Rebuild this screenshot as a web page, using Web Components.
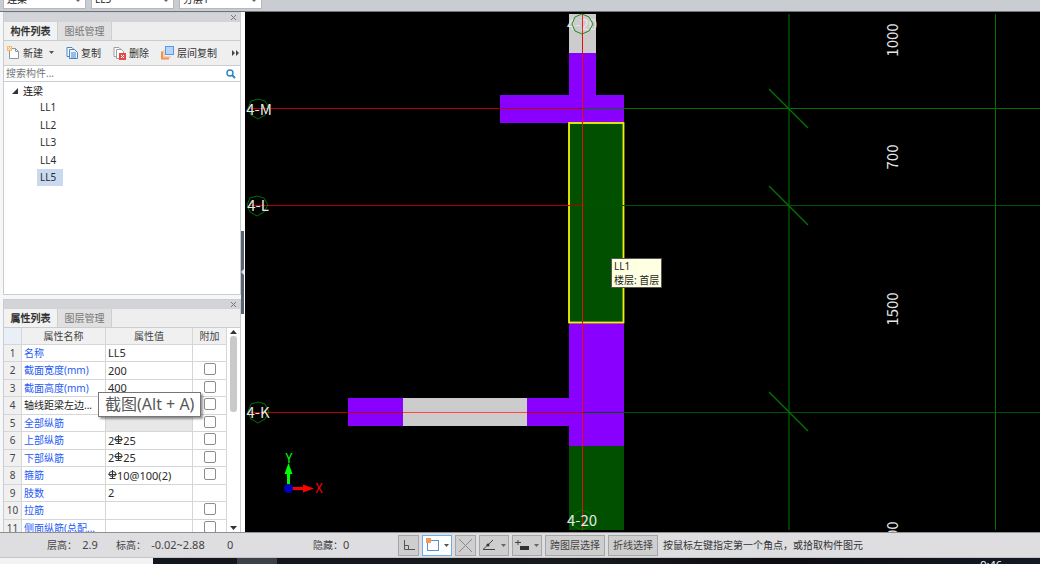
<!DOCTYPE html>
<html lang="zh-CN">
<head>
<meta charset="utf-8">
<title>构件编辑</title>
<style>
html,body{margin:0;height:100%}
body{font:10px/18px "Noto Sans","Noto Sans CJK SC",sans-serif;color:#2b2b2b;background:#dddde0;overflow:hidden}
</style>
</head>
<body>
<cad-app></cad-app>

<script>
const define = (name, html, setup) => customElements.define(name, class extends HTMLElement {
  constructor() {
    super();
    const t = document.createElement('template');
    t.innerHTML = html;
    this.attachShadow({mode: 'open'}).append(t.content.cloneNode(true));
  }
  connectedCallback() { if (setup) setup(this, this.shadowRoot); }
});

/* Context drop-downs, scrolled half out above the window */
define('top-bar', `
<style>
:host{display:flex;align-items:flex-end;gap:5px;height:12px;padding:0 3px 2px;box-sizing:border-box;background:#c9ccd1;border-bottom:1px solid #6f7479}
select{appearance:none;box-sizing:border-box;width:83px;height:20px;padding:0 3px;border:1px solid #b4b7bb;background:#fff;font:inherit;line-height:18px;color:#222}
label{position:relative;flex:none}
label::after{content:"";position:absolute;right:5px;bottom:7px;border:3px solid transparent;border-top-color:#666;border-bottom:0}
</style>
<label><select aria-label="构件类型"><option>连梁</option></select></label>
<label><select aria-label="构件"><option>LL5</option></select></label>
<label><select aria-label="分层"><option>分层1</option></select></label>`);

/* Docked panel: caption strip, two tabs, slotted body */
define('dock-panel', `
<style>
:host{display:flex;flex-direction:column;min-height:0;overflow:hidden;box-sizing:border-box;background:#fff;border:1px solid #c9cdd2}
.cap{display:flex;justify-content:flex-end;align-items:center;height:9px;background:#d2d4d8;flex:none;padding-right:3px}
.cap button{all:unset;display:flex}
nav{display:flex;flex:none;height:18px;background:#eee;border-bottom:1px solid #c9cdd2}
nav button{all:unset;box-sizing:border-box;width:54px;text-align:center;line-height:18px;color:#777;background:#e0e0e1;border-right:1px solid #ccd0d4}
nav button.on{color:#222;background:#f2f2f3;-webkit-text-stroke:.3px #222}
.body{flex:1;min-height:0;display:flex;flex-direction:column}
</style>
<div class="cap"><button aria-label="关闭"><svg width="7" height="7"><path d="M1 1l5 5M6 1L1 6" stroke="#777"/></svg></button></div>
<nav><button class="on"></button><button></button></nav>
<div class="body"><slot></slot></div>`, (el, r) => {
  const b = r.querySelectorAll('nav button');
  b[0].textContent = el.getAttribute('tab');
  b[1].textContent = el.getAttribute('other');
});

define('tool-action', `
<style>
:host{display:block;flex:none}
button{all:unset;display:flex;align-items:center;gap:3px;line-height:22px;color:#333}
</style>
<button><slot name="icon"></slot><slot></slot></button>`);

define('component-list', `
<style>
:host{display:flex;flex-direction:column;flex:1;min-height:0}
.tools{display:flex;align-items:center;height:24px;padding-left:3px;background:#efeff0;border-bottom:1px solid #c9cdd2;gap:12px;flex:none}
.tools>:last-child{margin-left:auto;padding-right:1px}
svg{display:block;flex:none}
.find{display:flex;align-items:center;height:15px;border-bottom:1px solid #c9cdd2;padding:0 4px 0 2px;flex:none}
input{flex:1;min-width:0;border:0;outline:0;padding:0;height:15px;font:inherit;line-height:15px}
input::placeholder{color:#757575;opacity:1}
ul{list-style:none;margin:0;padding:0}
.root{display:flex;align-items:center;gap:5px;height:17px;padding-left:8px;color:#111}
li li{display:flex;height:17px;padding-left:33px;line-height:17px}
li li:nth-child(even){height:18px;line-height:18px}
li li span{padding:0 7px 0 3px}
.sel{background:#c9d9f0}
</style>
<div class="tools">
 <tool-action><svg slot="icon" width="13" height="14" viewBox="0 0 13 14"><path d="M2.500 2.500h6l3 3v7h-9z" fill="#fff" stroke="#8b98a2"/><path d="M8.500 2.500v3h3" fill="none" stroke="#8b98a2"/><path d="M0 0h5v5H0z" fill="#fbb96a"/><path d="M1 1l3 3M4 1L1 4" stroke="#fff4df"/></svg>新建<svg width="8" height="6"><path d="M3 1h5L5.500 4z" fill="#555"/></svg></tool-action>
 <tool-action><svg slot="icon" width="12" height="14" viewBox="0 0 12 14"><path d="M1 1.500h5l2 2v7H1z" fill="#fff" stroke="#4986c6"/><path d="M3.500 3.500h5l3 3v6h-8z" fill="#e9f3ff" stroke="#4986c6"/><path d="M5 7h5M5 9h5M5 11h5" stroke="#4986c6"/></svg>复制</tool-action>
 <tool-action><svg slot="icon" width="13" height="14" viewBox="0 0 13 14"><path d="M1 1.500h5l2 2v7H1z" fill="#fff" stroke="#98a1a8"/><path d="M3.500 3.500h5l2 2v7h-7z" fill="#fff" stroke="#98a1a8"/><path d="M6 7h7v7H6z" fill="#e44848"/><path d="M8 9l3 3M11 9l-3 3" stroke="#fff"/></svg>删除</tool-action>
 <tool-action><svg slot="icon" width="13" height="14" viewBox="0 0 13 14"><path d="M1 5.500v7h7" fill="none" stroke="#f0914a" stroke-width="2"/><path d="M3 4v7h7" fill="none" stroke="#f5b37e"/><rect x="4.500" y=".5" width="8" height="8" fill="#b5d5ff" stroke="#5b98df"/></svg>层间复制</tool-action>
 <svg width="7" height="6"><path d="M0 0l3 3-3 3zM4 0l3 3-3 3z" fill="#444"/></svg>
</div>
<div class="find"><input type="text" aria-label="搜索构件" placeholder="搜索构件..."><svg width="10" height="10" viewBox="0 0 10 10"><circle cx="4" cy="4" r="3" fill="none" stroke="#2c84c4" stroke-width="1.400"/><path d="M6 6l3 3" stroke="#2c84c4" stroke-width="2"/></svg></div>
<ul><li><div class="root"><svg width="6" height="6"><path d="M6 0v6H0z" fill="#333"/></svg>连梁</div>
<ul><li><span>LL1</span></li><li><span>LL2</span></li><li><span>LL3</span></li><li><span>LL4</span></li><li><span class="sel">LL5</span></li></ul></li></ul>`);

const bar = '<svg width="9" height="9" viewBox="0 0 9 9" role="img" aria-label="HRB400"><path d="M4.500 0v8M1.500 8.500h6M.5 4.500h8" fill="none" stroke="#333"/><ellipse cx="4.500" cy="4" rx="3.500" ry="2.500" fill="none" stroke="#333"/></svg>';
const rows = [
  ['名称', 'LL5', 0], ['截面宽度(mm)', '200', 1], ['截面高度(mm)', '400', 1],
  ['轴线距梁左边...', '', 1, 'plain'], ['全部纵筋', '', 1, 'dim'],
  ['上部纵筋', '2' + bar + '25', 1], ['下部纵筋', '2' + bar + '25', 1],
  ['箍筋', bar + '10@100(2)', 1], ['肢数', '2', 0], ['拉筋', '', 1], ['侧面纵筋(总配...', '', 1]
];
define('property-grid', `
<style>
:host{display:flex;flex:1;min-height:0;overflow:hidden}
.view{flex:1;min-width:0;overflow:hidden}
table{border-collapse:separate;border-spacing:0;table-layout:fixed;width:100%}
col:nth-child(1){width:18px}col:nth-child(2){width:84px}col:nth-child(4){width:34px}
th,td{box-sizing:border-box;height:17px;line-height:16px;padding:0;border-right:1px solid #d4d6d8;border-bottom:1px solid #d4d6d8;font-weight:400;white-space:nowrap;overflow:hidden}
tbody tr:nth-child(even)>*{height:18px;line-height:17px}
thead th{background:#f0f0f0;color:#444}
thead th:first-child{background:#e9eff6}
tbody th{background:#f0f0f1;color:#444}
td{padding-left:2px}
td:nth-child(2){color:#1f5cf5}
td:nth-child(3){font-size:11px}
.plain td:nth-child(2){color:#222}
.dim td:nth-child(3){background:#e8e8e8}
td:last-child{padding:0;text-align:center;font-size:0}
td svg{vertical-align:1px}
input{appearance:none;box-sizing:border-box;width:12px;height:12px;margin:1px 0 0;border:1px solid #8d8d8d;border-radius:2px;background:#fff;vertical-align:top}
.scroll{width:13px;flex:none;display:flex;flex-direction:column;align-items:center;padding:2px 0;box-sizing:border-box;background:#fff}
.thumb{width:7px;height:76px;margin-top:2px;border-radius:3px;background:#c9c9c9}
.scroll svg:last-child{margin-top:auto}
</style>
<div class="view"><table><colgroup><col><col><col><col></colgroup>
<thead><tr><th></th><th>属性名称</th><th>属性值</th><th>附加</th></tr></thead><tbody></tbody></table></div>
<div class="scroll"><svg width="7" height="4"><path d="M0 4L3.500 0 7 4z" fill="#333"/></svg><div class="thumb"></div><svg width="7" height="4"><path d="M0 0L3.500 4 7 0z" fill="#333"/></svg></div>`, (el, r) => {
  r.querySelector('tbody').innerHTML = rows.map(([n, v, c, k], i) =>
    `<tr class="${k || ''}"><th>${i + 1}</th><td>${n}</td><td>${v}</td><td>${c ? `<input type="checkbox" aria-label="附加 ${n}">` : ''}</td></tr>`).join('');
});

define('drawing-view', `
<style>
:host{display:block;position:relative;background:#000;overflow:hidden}
svg{display:block;width:100%;height:100%;position:absolute}
text{font:15px "Noto Sans CJK SC",sans-serif;fill:#e6e6e6;text-anchor:middle}
.p{fill:#8a00ff}.w{fill:#ccc}.g{fill:#005000}
.ring{fill:none;stroke:#007000}
.red{fill:#b40000}.axis{fill:#005400}
.tick{stroke:#007800;stroke-width:1.300;fill:none}
.tip{position:absolute;left:366px;top:246px;box-sizing:border-box;padding:0 2px;background:#ffffe1;border:1px solid #555;line-height:14px;color:#222;white-space:nowrap}
</style>
<svg>
 <rect class="w" x="324" y="2" width="27" height="40"/>
 <rect class="p" x="324" y="41" width="27" height="43"/>
 <rect class="p" x="255" y="83" width="124" height="28"/>
 <rect class="p" x="324" y="311" width="55" height="123"/>
 <rect class="p" x="103" y="386" width="55" height="28"/>
 <rect class="w" x="158" y="386" width="125" height="28"/>
 <rect class="p" x="282" y="386" width="43" height="28"/>
 <rect class="g" x="324" y="434" width="55" height="84"/>
 <rect x="324" y="111" width="54.500" height="199.500" fill="#005000" stroke="#f2f200" stroke-width="1.800"/>
 <g class="axis">
  <rect x="338" y="96" width="100%" height="1" fill="#007000"/><rect x="338" y="193" width="100%" height="1"/><rect x="338" y="400" width="100%" height="1"/>
  <rect x="543" y="2" width="2" height="516" fill="#003c00"/><rect x="750" y="2" width="1" height="516" fill="#007000"/>
 </g>
 <g class="red"><rect x="4" y="96" width="334" height="1"/><rect x="4" y="193" width="334" height="1"/><rect x="4" y="400" width="334" height="1"/><rect x="337" y="2" width="1" height="516" fill="#e01010"/></g>
 <path d="M158 400h124v1H158z" fill="#f44"/>
 <path class="tick" d="M524 77l39 39M524 174l39 39M524 380l39 39"/>
 <g class="ring"><path d="M13 87l7 2 4 7-4 7-7 4-7-4-3-7 3-7z"/><path d="M12 184l7 2 4 7-4 7-7 4-7-4-3-7 3-7z"/><path d="M13 390l7 2 4 8-4 7-7 4-7-4-3-7 3-8z"/>
 <path d="M337 498l8 3 3 7-4 7-7 3-7-3-4-7 4-7z"/></g>
 <text x="14" y="103">4-M</text><text x="13" y="199">4-L</text><text x="13" y="406">4-K</text>
 <text x="337" y="18">4-20</text><text x="337" y="514">4-20</text>
 <path d="M337 2l7 3 4 7-4 7-7 3-7-3-3-7 3-7z" fill="none" stroke="#208a20"/>
 <rect x="337" y="2" width="1" height="20" fill="#f02020"/>
 <text transform="translate(653 28) rotate(-90)">1000</text>
 <text transform="translate(653 145) rotate(-90)">700</text>
 <text transform="translate(653 297) rotate(-90)">1500</text>
 <text transform="translate(653 526) rotate(-90)">1000</text>
 <path d="M43.500 476V459" stroke="#0f0" stroke-width="3"/><path d="M43.500 451l4 11h-8z" fill="#0f0"/>
 <path d="M43 476.500h17" stroke="#f00" stroke-width="3"/><path d="M69 476.500l-11-4v8z" fill="#f00"/>
 <circle cx="43.500" cy="476.500" r="4.500" fill="#0000c0"/>
 <text x="44" y="451" style="font-size:13px;fill:#0f0">Y</text><text x="74" y="481" style="font-size:13px;fill:#f00">X</text>
</svg>
<div class="tip" role="tooltip">LL1<br>楼层: 首层</div>`);

define('status-bar', `
<style>
:host{display:flex;align-items:center;height:26px;box-sizing:border-box;background:#dedee1;border-top:1px solid #8f8f92;border-bottom:1px solid #c4c4c8;white-space:nowrap;overflow:hidden;flex:none;color:#444}
.info{display:flex;flex:none;width:398px;box-sizing:border-box;padding-left:47px}
.info span{flex:none}
.info b{font-size:11px;font-weight:400}
.info span:nth-child(1){width:69px}.info span:nth-child(2){width:111px}.info span:nth-child(3){width:86px}
.btns{display:flex;gap:3px;flex:none}
svg{flex:none}
button{all:unset;box-sizing:border-box;height:21px;border:1px solid #a6a6a8;background:#cececf;display:flex;align-items:center;justify-content:center;gap:5px;padding:0 2px;line-height:19px}
.t{padding:0 4px}
.s{width:21px}.m{width:30px}.a{background:#fff;border-color:#66b0f5}
.msg{padding-left:5px;color:#333}
</style>
<div class="info"><span>层高：&nbsp; <b>2.9</b></span><span>标高：&nbsp; <b>-0.02~2.88</b></span><span><b>0</b></span><span>隐藏：<b>0</b></span></div>
<div class="btns">
<button class="s" aria-label="正交"><svg width="12" height="12"><path d="M1.500 1v9.500H12M1.500 6.500h4v4" fill="none" stroke="#555"/></svg></button>
<button class="m a" aria-label="选择方式"><svg width="13" height="14"><rect x="1.500" y="2.500" width="11" height="10" fill="#fff" stroke="#5b8fd9"/><path d="M0 0h5v5H0z" fill="#f29a5c"/></svg><svg width="5" height="3"><path d="M0 0h5L2.500 3z" fill="#555"/></svg></button>
<button class="s" aria-label="交点"><svg width="13" height="13"><path d="M0 0l13 13M13 0L0 13" stroke="#888"/></svg></button>
<button class="m" aria-label="角度"><svg width="14" height="12"><path d="M11 1L1 10.500h12" fill="none" stroke="#444"/><circle cx="6" cy="6" r="1.500" fill="#333"/></svg><svg width="5" height="3"><path d="M0 0h5L2.500 3z" fill="#666"/></svg></button>
<button class="m" aria-label="动态输入"><svg width="14" height="12"><path d="M3 1v5M0 3.500h6" stroke="#444"/><path d="M5 7h9v4H5z" fill="#333"/></svg><svg width="5" height="3"><path d="M0 0h5L2.500 3z" fill="#666"/></svg></button>
<button class="t">跨图层选择</button><button class="t">折线选择</button></div>
<span class="msg">按鼠标左键指定第一个角点，或拾取构件图元</span>`);

define('task-bar', `
<style>
:host{display:flex;height:6px;flex:none;background:linear-gradient(90deg,#10151d,#171a1c 55%,#0b0d10 75%,#141923);overflow:hidden}
.find{width:153px;background:#f3f3f3}
.app{width:40px;margin-left:84px;background:#3d4148}
time{margin-left:auto;padding-right:38px;color:#fff;font-size:11px;line-height:14px}
</style>
<div class="find"></div><div class="app"></div><time>9:46</time>`);

define('cad-app', `
<style>
:host{display:flex;flex-direction:column;height:100vh;min-height:320px}
main{flex:1;min-height:0;display:flex;background:#fff}
aside{position:relative;width:238px;padding-left:3px;flex:none;display:flex;flex-direction:column;gap:4px;background:#f6f7f8}
dock-panel:first-child{flex:283}
dock-panel:nth-child(2){flex:233;border-bottom:0}
.split{width:4px;flex:none;display:flex;align-items:center;background:#fff}
.split button{all:unset;width:3px;height:83px;background:#5a6370;display:flex;align-items:center}
drawing-view{flex:1;min-width:0}
.hint{position:absolute;left:98px;top:380px;box-sizing:border-box;height:25px;padding:0 6px;border:1px solid #767676;background:#fff;box-shadow:2px 2px 2px #0006;font-size:16px;line-height:23px;color:#575757;white-space:nowrap}
</style>
<top-bar></top-bar>
<main>
 <aside>
  <dock-panel tab="构件列表" other="图纸管理"><component-list></component-list></dock-panel>
  <dock-panel tab="属性列表" other="图层管理"><property-grid></property-grid></dock-panel>
  <div class="hint" role="tooltip">截图(Alt + A)</div>
 </aside>
 <div class="split"><button aria-label="收起面板"><svg width="3" height="6"><path d="M3 0v6L0 3z" fill="#ddd"/></svg></button></div>
 <drawing-view></drawing-view>
</main>
<status-bar></status-bar>
<task-bar></task-bar>`);
</script>
</body>
</html>
